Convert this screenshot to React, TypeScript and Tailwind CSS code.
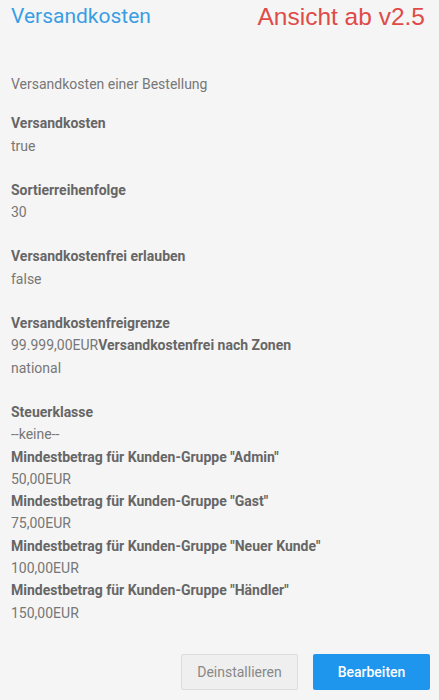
import React from 'react';

type Field = { label: string; value: React.ReactNode };

const FIELDS: Field[] = [
  { label: 'Versandkosten', value: 'true' },
  { label: 'Sortierreihenfolge', value: '30' },
  { label: 'Versandkostenfrei erlauben', value: 'false' },
];

const MINIMUMS = [
  { group: 'Admin', value: '50,00EUR' },
  { group: 'Gast', value: '75,00EUR' },
  { group: 'Neuer Kunde', value: '100,00EUR' },
  { group: 'Händler', value: '150,00EUR' },
];

const Label: React.FC<{ children: React.ReactNode }> = ({ children }) => (
  <div className="font-bold text-[#666]">{children}</div>
);

const App: React.FC = () => {
  return (
    <div className="min-h-[700px] w-[439px] bg-[#f5f5f5] px-[11px] text-[14px] leading-[22.3px] text-[#777]" style={{ fontFamily: 'Roboto, "Noto Sans", sans-serif' }}>
      <div className="flex items-start justify-between pt-[2px]">
        <h1 className="text-[21px] leading-[28px] text-[#3a9ee4]">Versandkosten</h1>
        <span className="pr-[3px] text-[24.5px] leading-[30px] text-[#de4b48]" style={{ fontFamily: '"Liberation Sans", Arial, sans-serif' }}>
          Ansicht ab v2.5
        </span>
      </div>

      <p className="mt-[41px] mb-[17px]">Versandkosten einer Bestellung</p>

      {FIELDS.map((f) => (
        <div key={f.label} className="mb-[22px]">
          <Label>{f.label}</Label>
          <div>{f.value}</div>
        </div>
      ))}

      <div className="mb-[22px]">
        <Label>Versandkostenfreigrenze</Label>
        <div>
          99.999,00EUR<span className="font-bold text-[#666]">Versandkostenfrei nach Zonen</span>
        </div>
        <div>national</div>
      </div>

      <div>
        <Label>Steuerklasse</Label>
        <div>--keine--</div>
        {MINIMUMS.map((m) => (
          <div key={m.group}>
            <Label>Mindestbetrag für Kunden-Gruppe "{m.group}"</Label>
            <div>{m.value}</div>
          </div>
        ))}
      </div>

      <div className="mt-[30px] flex justify-end gap-[15px]">
        <button className="h-[36px] w-[117px] rounded-[2px] border border-[#dcdcdc] bg-[#efefef] text-[14px] text-[#888]">
          Deinstallieren
        </button>
        <button className="mr-[-2px] h-[36px] w-[117px] rounded-[2px] bg-[#1e96ee] text-[14px] font-medium text-white">
          Bearbeiten
        </button>
      </div>
    </div>
  );
};

export default App;
